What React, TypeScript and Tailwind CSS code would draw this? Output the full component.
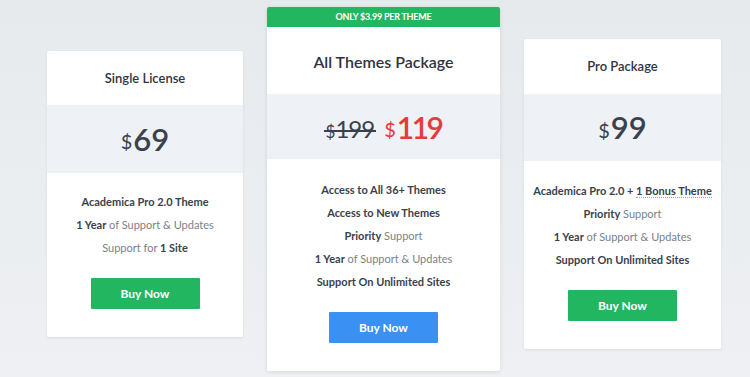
import React from 'react';

const font = { fontFamily: 'Lato, "Open Sans", Arial, sans-serif' };

const B = ({ children }: { children: React.ReactNode }) => (
  <span className="font-bold text-[#3a414d]">{children}</span>
);

const Feature = ({ children }: { children: React.ReactNode }) => (
  <li className="text-[11px] leading-[23px] text-[#7a818c]">{children}</li>
);

const BuyButton = ({ color }: { color: 'green' | 'blue' }) => (
  <button
    className={
      color === 'green'
        ? 'w-[109px] h-[31px] bg-[#22b660] text-white text-[12px] font-bold rounded-[1px]'
        : 'w-[109px] h-[31px] bg-[#3b90f3] text-white text-[12px] font-bold rounded-[1px]'
    }
  >
    Buy Now
  </button>
);

export default function App() {
  return (
    <div
      className="w-[750px] h-[377px] overflow-hidden bg-gradient-to-b from-[#e7eaed] to-[#eef0f3] flex items-start pl-[47px] gap-[24px]"
      style={font}
    >
      {/* Single License */}
      <div className="mt-[51px] w-[196px] h-[286px] bg-white rounded-[2px] shadow-[0_1px_3px_rgba(0,0,0,0.08)] flex flex-col">
        <div className="h-[54px] flex items-center justify-center text-[13px] font-semibold text-[#2e3440] pt-[1px]">
          Single License
        </div>
        <div className="h-[68px] bg-[#eef1f5] flex items-center justify-center text-[#3a414d]">
          <span className="text-[20px] mt-[4px] mr-[1px]">$</span>
          <span className="text-[31px] font-semibold leading-none">69</span>
        </div>
        <ul className="mt-[17px] text-center">
          <Feature><B>Academica Pro 2.0 Theme</B></Feature>
          <Feature><B>1 Year</B> of Support &amp; Updates</Feature>
          <Feature>Support for <B>1 Site</B></Feature>
        </ul>
        <div className="flex justify-center mt-[19px]">
          <BuyButton color="green" />
        </div>
      </div>

      {/* All Themes Package */}
      <div className="mt-[7px] w-[233px] h-[364px] bg-white rounded-[2px] shadow-[0_1px_4px_rgba(0,0,0,0.1)] flex flex-col overflow-hidden">
        <div className="h-[20px] bg-[#22b660] flex items-center justify-center text-[9px] font-bold text-white tracking-tight">
          ONLY $3.99 PER THEME
        </div>
        <div className="h-[67px] flex items-center justify-center text-[16px] font-semibold text-[#2e3440] pt-[2px]">
          All Themes Package
        </div>
        <div className="h-[65px] bg-[#eef1f5] flex items-center justify-center">
          <span className="relative text-[#3a414d] mr-[10px] mt-[4px]">
            <span className="text-[17px]">$</span>
            <span className="text-[24px] tracking-[-1px]">199</span>
            <span className="absolute left-[-2px] right-[-2px] top-[55%] h-[1.5px] bg-[#3a414d]" />
          </span>
          <span className="text-[#e53b3b] flex items-center">
            <span className="text-[20px] mt-[4px] mr-[1px]">$</span>
            <span className="text-[30px] font-semibold leading-none tracking-[-2.5px]">119</span>
          </span>
        </div>
        <ul className="mt-[19px] text-center">
          <Feature><B>Access to All 36+ Themes</B></Feature>
          <Feature><B>Access to New Themes</B></Feature>
          <Feature><B>Priority</B> Support</Feature>
          <Feature><B>1 Year</B> of Support &amp; Updates</Feature>
          <Feature><B>Support On Unlimited Sites</B></Feature>
        </ul>
        <div className="flex justify-center mt-[19px]">
          <BuyButton color="blue" />
        </div>
      </div>

      {/* Pro Package */}
      <div className="mt-[39px] w-[197px] h-[310px] bg-white rounded-[2px] shadow-[0_1px_3px_rgba(0,0,0,0.08)] flex flex-col">
        <div className="h-[55px] flex items-center justify-center text-[13px] font-semibold text-[#2e3440] pt-[1px]">
          Pro Package
        </div>
        <div className="h-[67px] bg-[#eef1f5] flex items-center justify-center text-[#3a414d]">
          <span className="text-[20px] mt-[4px] mr-[1px]">$</span>
          <span className="text-[31px] font-semibold leading-none">99</span>
        </div>
        <ul className="mt-[18px] text-center">
          <Feature>
            <B>Academica Pro 2.0 + </B>
            <span className="font-bold text-[#3a414d] border-b border-dotted border-[#9aa0a8]">1 Bonus Theme</span>
          </Feature>
          <Feature><B>Priority</B> Support</Feature>
          <Feature><B>1 Year</B> of Support &amp; Updates</Feature>
          <Feature><B>Support On Unlimited Sites</B></Feature>
        </ul>
        <div className="flex justify-center mt-[19px]">
          <BuyButton color="green" />
        </div>
      </div>
    </div>
  );
}
